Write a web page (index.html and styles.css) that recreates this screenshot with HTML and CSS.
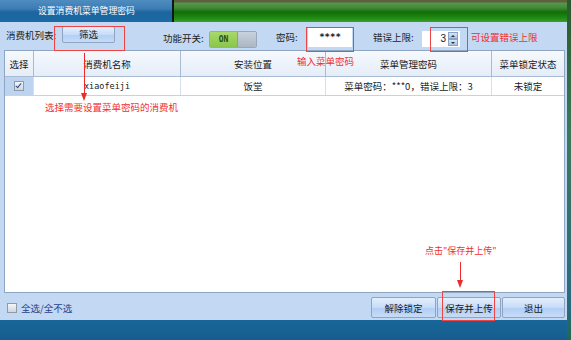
FILE: index.html
```html
<!DOCTYPE html>
<html>
<head>
<meta charset="utf-8">
<link rel="stylesheet" href="styles.css">
</head>
<body>
<div class="screen">
  <div class="window">
    <div class="titlebar">
      <div class="tab">设置消费机菜单管理密码</div>
      <div class="sep"></div>
      <div class="green"></div>
    </div>
    <div class="content">
      <div class="toolbar">
        <span class="lbl l1">消费机列表:</span>
        <span class="btn filter">筛选</span>
        <span class="lbl l2">功能开关:</span>
        <span class="toggle"><span class="on">ON</span><span class="off"></span></span>
        <span class="lbl l3">密码:</span>
        <span class="pwd">****</span>
        <span class="lbl l4">错误上限:</span>
        <span class="spin"><span class="val">3</span><span class="arrows"><span class="up"></span><span class="down"></span></span></span>
        <span class="note n1">可设置错误上限</span>
      </div>
      <div class="table">
        <div class="row head">
          <div class="c c1">选择</div>
          <div class="c c2">消费机名称</div>
          <div class="c c3">安装位置</div>
          <div class="c c4">菜单管理密码</div>
          <div class="c c5">菜单锁定状态</div>
        </div>
        <div class="row data">
          <div class="c c1 sel"><span class="cb checked"></span></div>
          <div class="c c2 mono">xiaofeiji</div>
          <div class="c c3">饭堂</div>
          <div class="c c4">菜单密码：***0，错误上限：3</div>
          <div class="c c5">未锁定</div>
        </div>
      </div>
      <div class="bottom">
        <span class="cb"></span>
        <span class="all">全选/全不选</span>
        <span class="spacer"></span>
        <span class="btn b1">解除锁定</span>
        <span class="btn b2">保存并上传</span>
        <span class="btn b3">退出</span>
      </div>
      <div class="redbox r1"></div>
      <div class="redbox r2"></div>
      <div class="redbox r3"></div>
      <div class="redbox r4"></div>
      <div class="arrow a1"></div>
      <div class="arrow a2"></div>
      <div class="note n2">输入菜单密码</div>
      <div class="note n3">选择需要设置菜单密码的消费机</div>
      <div class="note n4">点击"保存并上传"</div>
    </div>
    <div class="footer"></div>
  </div>
  <div class="desk"></div>
</div>
</body>
</html>
```
FILE: styles.css
```css
html, body { margin: 0; padding: 0; }
body { width: 571px; height: 340px; overflow: hidden; font-family: "Noto Sans CJK SC", "Noto Sans", sans-serif; font-size: 9.5px; color: #1a1a1a; }
.screen { display: flex; width: 571px; height: 340px; background: #1b5f3a; }
.window { width: 567px; display: flex; flex-direction: column; }
.desk { flex: 1; background: linear-gradient(to bottom, #2a5a2a, #3a7a5a 40%, #2a6a80 90%, #1e6a50); }
.titlebar { height: 22px; display: flex; }
.tab { width: 172px; background: linear-gradient(to bottom, #4f8cc0 0%, #3b7db4 40%, #1d659f 55%, #1a6aa6 100%); color: #fff; font-size: 8.8px; line-height: 22px; padding-left: 38px; box-sizing: border-box; }
.sep { width: 2px; background: #0e1a14; }
.green { flex: 1; background: linear-gradient(to bottom, #6a5a40 0px, #4a6a3a 2px, #5a9650 3px, #3f8a35 8px, #126e08 12px, #1f8a12 18px, #39a02a 22px); }
.content { position: relative; height: 298px; background: #c3d8f2; display: flex; flex-direction: column; }
.footer { height: 20px; background: linear-gradient(to bottom, #1a6698, #155d8f); }

.toolbar { height: 28px; display: flex; align-items: center; position: relative; }
.lbl { font-size: 9.5px; color: #222; white-space: nowrap; box-sizing: border-box; }
.l1 { margin-left: 6px; width: 56px; margin-top: -2px; }
.btn { display: inline-flex; align-items: center; justify-content: center; box-sizing: border-box; border: 1px solid #8ea4c0; border-radius: 2px; background: linear-gradient(to bottom, #e2eefc 0%, #c7dcf8 50%, #b2cff5 55%, #c6dbf7 100%); font-size: 9.5px; color: #1a1a1a; }
.filter { width: 53px; height: 17px; margin-top: -4px; }
.l2 { margin-left: 48px; width: 46px; margin-top: 4px; }
.toggle { display: flex; width: 48px; height: 17px; margin-top: 6px; border: 1px solid #98a8b8; border-radius: 2px; box-sizing: border-box; overflow: hidden; }
.toggle .on { width: 27px; background: linear-gradient(to bottom, #a8d86a, #8ac64a); color: #1f4f1a; font-size: 8px; font-weight: bold; font-family: "DejaVu Sans Mono", monospace; text-align: center; line-height: 15px; }
.toggle .off { flex: 1; background: linear-gradient(to bottom, #c8d2dc, #aab6c2); border-left: 1px solid #8d9aa8; }
.l3 { margin-left: 19px; width: 32px; margin-top: 2px; }
.pwd { width: 44px; height: 19px; margin-top: 2px; background: #fff; font-size: 9px; font-family: "DejaVu Sans Mono", monospace; text-align: center; line-height: 19px; font-weight: bold; }
.l4 { margin-left: 21px; width: 49px; margin-top: 2px; }
.spin { display: flex; width: 38px; height: 16px; margin-top: 6px; background: #fff; }
.spin .val { flex: 1; text-align: right; padding-right: 2px; font-size: 10px; line-height: 16px; font-family: "Liberation Sans", sans-serif; }
.spin .arrows { width: 10px; display: flex; flex-direction: column; margin: 1px 2px 1px 0; }
.spin .up, .spin .down { flex: 1; background: linear-gradient(to bottom, #d8e6f6, #a9c4e6); border: 1px solid #8aa3c4; position: relative; }
.spin .up::after { content: ""; position: absolute; left: 2px; top: 2px; border-left: 2px solid transparent; border-right: 2px solid transparent; border-bottom: 2px solid #234; }
.spin .down::after { content: ""; position: absolute; left: 2px; top: 2px; border-left: 2px solid transparent; border-right: 2px solid transparent; border-top: 2px solid #234; }
.note { color: #f03030; font-size: 9.5px; white-space: nowrap; }
.n1 { margin-left: 11px; margin-top: 2px; }

.table { margin-left: 4px; width: 561px; height: 243px; background: #fff; border: 1px solid #8fa6c2; box-sizing: border-box; }
.row { display: flex; }
.head { height: 25px; background: linear-gradient(to bottom, #f6f9fd, #e4edf8); border-bottom: 1px solid #a9bbd2; }
.data { height: 18px; border-bottom: 1px solid #c2d4ea; }
.c { display: flex; align-items: center; justify-content: center; box-sizing: border-box; border-right: 1px solid #a9bbd2; font-size: 9.5px; white-space: nowrap; }
.data .c { border-right: 1px solid #d4e0ee; }
.c1 { width: 29px; }
.c2 { width: 147px; }
.c3 { width: 145px; }
.c4 { width: 166px; }
.c5 { flex: 1; border-right: none !important; }
.sel { background: #bcd4f0; }
.mono { font-family: "DejaVu Sans Mono", monospace; font-size: 8.5px; }
.cb { display: inline-block; width: 8px; height: 8px; border: 1px solid #8f9aa8; background: linear-gradient(to bottom, #f4f6f8, #d0d6de); position: relative; }
.cb.checked::after { content: ""; position: absolute; left: 2px; top: 0px; width: 2px; height: 5px; border: solid #2b4a8a; border-width: 0 1.5px 1.5px 0; transform: rotate(40deg); }

.bottom { display: flex; align-items: center; height: 27px; padding-top: 2px; box-sizing: border-box; }
.bottom .cb { margin-left: 7px; }
.all { margin-left: 4px; color: #2a3f8a; font-size: 9.5px; }
.spacer { flex: 1; }
.bottom .btn { height: 21px; margin-right: 1px; }
.b1 { width: 65px; }
.b2 { width: 64px; }
.b3 { width: 63px; margin-right: 2px !important; }

.redbox { position: absolute; border: 1px solid #ee4444; box-sizing: border-box; }
.r1 { left: 54px; top: 4px; width: 71px; height: 25px; }
.r2 { left: 306px; top: 5px; width: 48px; height: 25px; }
.r3 { left: 430px; top: 5px; width: 38px; height: 25px; }
.r4 { left: 442px; top: 269px; width: 53px; height: 30px; }
.arrow { position: absolute; width: 1px; background: #ee2a2a; }
.arrow::after { content: ""; position: absolute; left: -3px; bottom: -6px; border-left: 3.5px solid transparent; border-right: 3.5px solid transparent; border-top: 8px solid #ee2a2a; }
.a1 { left: 84px; top: 31px; height: 42px; }
.a2 { left: 460px; top: 240px; height: 20px; }
.n2 { position: absolute; left: 297px; top: 32px; }
.n3 { position: absolute; left: 45px; top: 78px; }
.n4 { position: absolute; left: 425px; top: 222px; font-size: 9px; }
```
